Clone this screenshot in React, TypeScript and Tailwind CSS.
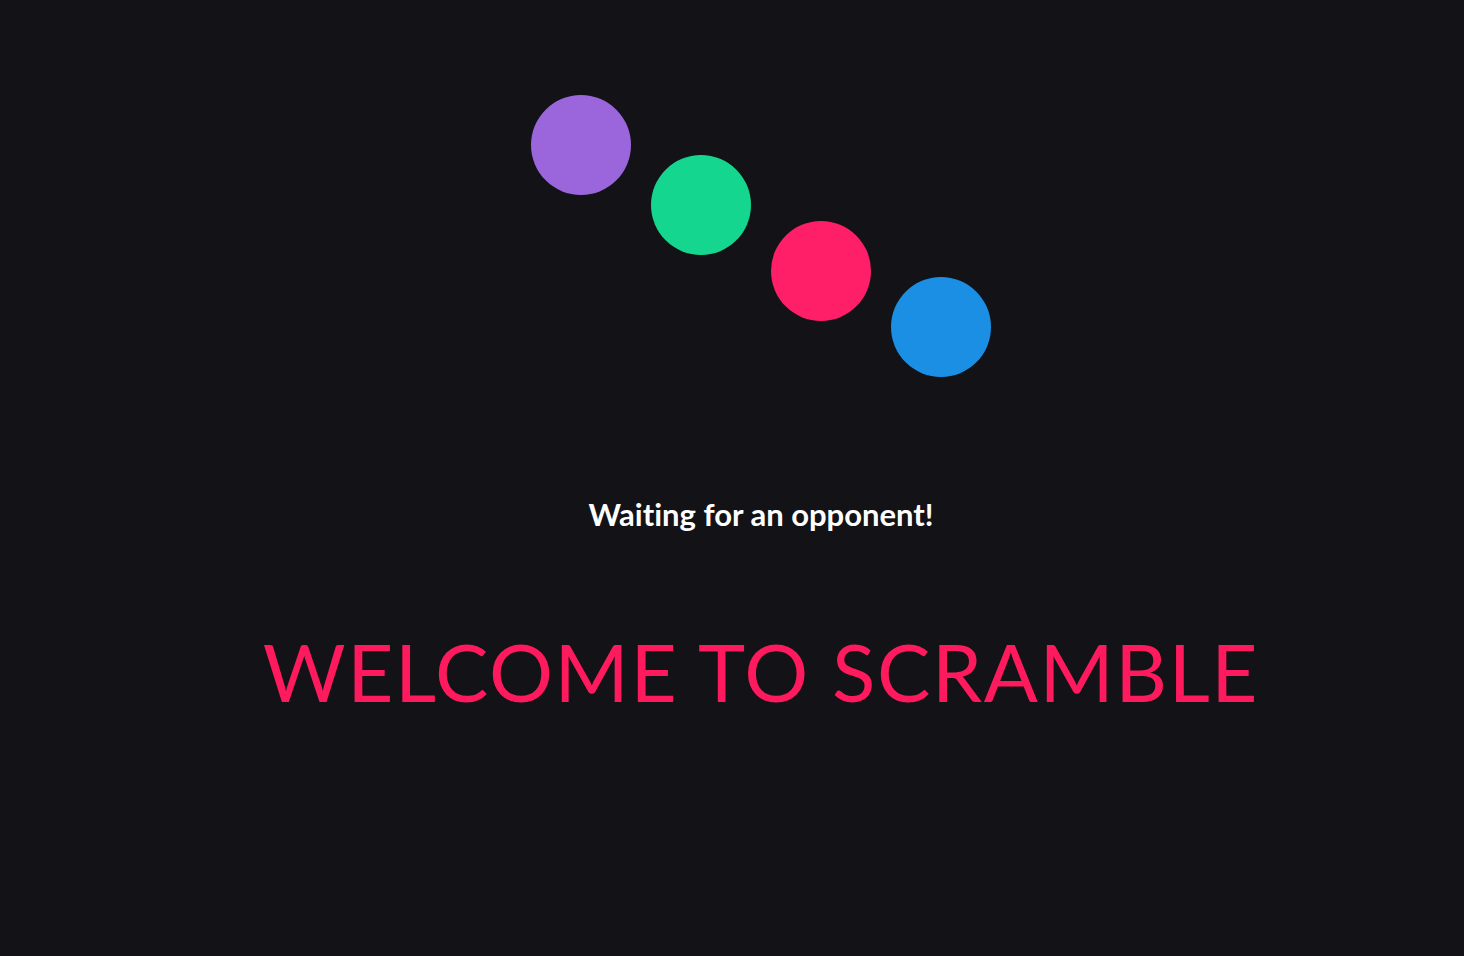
import React from 'react';

const dots = [
  { color: 'bg-[#9b66dc]', offset: 'mt-0' },
  { color: 'bg-[#15d68f]', offset: 'mt-[60px]' },
  { color: 'bg-[#ff1e68]', offset: 'mt-[126px]' },
  { color: 'bg-[#1a8fe3]', offset: 'mt-[182px]' },
];

const App: React.FC = () => {
  return (
    <div className="min-h-[956px] w-full bg-[#121217] font-['Lato',sans-serif] pl-[58px]">
      <div className="flex flex-col items-center pt-[95px]">
        {/* Loader */}
        <div className="flex items-start gap-5 h-[282px]">
          {dots.map((d, i) => (
            <div key={i} className={`w-[100px] h-[100px] rounded-full ${d.color} ${d.offset}`} />
          ))}
        </div>
        <p className="mt-[119px] text-[31px] leading-[36px] font-bold text-white [font-variant-ligatures:none]">
          Waiting for an opponent!
        </p>
        <h1 className="mt-[89px] text-[80px] leading-[100px] text-[#ff1a5e] tracking-[1.6px]">
          WELCOME TO SCRAMBLE
        </h1>
      </div>
    </div>
  );
};

export default App;
